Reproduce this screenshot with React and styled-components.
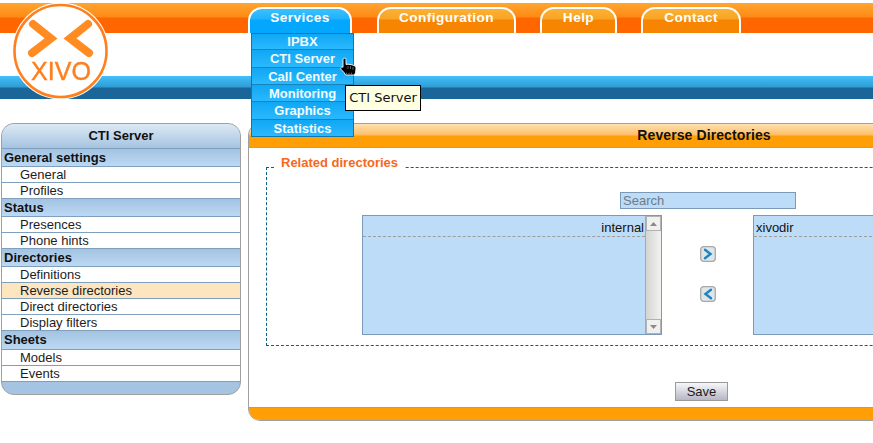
import React from 'react';
import styled, { createGlobalStyle } from 'styled-components';

const Global = createGlobalStyle`
  html, body { margin: 0; padding: 0; background: #fff; overflow: hidden; }
  body { font-family: "Liberation Sans", Arial, sans-serif; color: #000; }
`;
const Page = styled.div`
  position: relative; width: 873px; height: 443px; overflow: hidden; padding-top: 3px; box-sizing: border-box;
`;
const TopBar = styled.header`
  height: 30px; box-sizing: border-box; padding: 4px 0 0 248px; display: flex; gap: 24px; align-items: stretch;
  background: linear-gradient(#ffa531 0, #fd8a14 14px, #ff6600 15px, #ff6600 100%);
`;
const Tab = styled.div`
  box-sizing: border-box; height: 26px; width: ${p => p.$w}px; text-align: center;
  margin-right: ${p => p.$mr || 0}px;
  border: 2px solid #fff; border-bottom: 0; border-radius: 14px 14px 0 0;
  background: ${p => p.$active
    ? 'linear-gradient(#3cc0fd 0, #1fb2fb 10px, #03a7fd 11px, #03a7fd 100%)'
    : 'linear-gradient(#fbb135 0, #f9a424 10px, #f78502 11px, #f78502 100%)'};
  color: #fff; font-weight: bold; font-size: 13.6px; letter-spacing: .45px; line-height: 17px;
`;
const WhiteBand = styled.div`height: 43px;`;
const BlueBar = styled.div`
  height: 23px;
  background: linear-gradient(#44c0fc 0, #2f9cd3 11px, #1a6699 12px, #1a6699 100%);
`;
const Body = styled.div`
  display: flex; align-items: flex-start; gap: 7px; padding: 24px 0 0 1px;
`;
const Logo = styled.svg`
  position: absolute; left: 11px; top: 2px; width: 100px; height: 100px; filter: blur(.35px);
`;
const DropDown = styled.nav`
  position: absolute; left: 251px; top: 33px; width: 103px; height: 104px; box-sizing: border-box;
  display: flex; flex-direction: column; border: 1px solid #0d78b0; z-index: 3;
`;
const DropItem = styled.div`
  flex: 1 1 0; min-height: 0; box-sizing: border-box; display: flex; align-items: center; justify-content: center; padding-top: 1px;
  background: linear-gradient(#10a7f3, #2ab9ff); color: #f4fbff; font-weight: bold; font-size: 13px;
  border-top: 1px solid #1683bb; &:first-child { border-top: 0; padding-top: 0; }
`;
const Tooltip = styled.div`
  position: absolute; left: 345px; top: 85px; width: 76px; height: 26px; box-sizing: border-box; z-index: 4;
  border: 1px solid #000; background: #ffffe1; font: 13px/24px "DejaVu Sans", sans-serif; color: #111; text-align: center;
`;
const Cursor = styled.svg`
  position: absolute; left: 339px; top: 57px; width: 19px; height: 19px; z-index: 5;
`;
const Side = styled.aside`
  width: 240px; flex: none; height: 272px; box-sizing: border-box; border-radius: 13px; overflow: hidden;
  border: 1px solid #a0a0a0; background: #a5c4e1; display: flex; flex-direction: column;
`;
const SideTitle = styled.div`
  height: 25px; flex: none; text-align: center; font-weight: bold; font-size: 13px; line-height: 24px; color: #111;
  background: linear-gradient(#dde9f4, #a5c4e1);
  border-bottom: 1px solid #7f9fbd; box-sizing: border-box;
`;
const SideHead = styled.div`
  height: ${p => p.$h}px; flex: none; box-sizing: border-box; padding-left: 2px; font-weight: bold; font-size: 13px; line-height: 17px; color: #111;
  background: linear-gradient(#a3c3e1, #bcd9f4);
  border-bottom: 1px solid #7f9fbd;
`;
const SideItem = styled.div`
  height: 16px; flex: none; box-sizing: border-box; padding-left: 18px; font-size: 13px; line-height: 15px; color: #1c1c1c;
  background: ${p => p.$active ? '#fde5c0' : '#fff'};
  border-bottom: 1px solid #7f9fbd;
`;
const Panel = styled.main`
  width: 912px; flex: none; height: 298px; box-sizing: border-box; display: flex; flex-direction: column;
  border: 1px solid #a0a0a0; border-radius: 12px; overflow: hidden; background: #fff;
`;
const PanelHead = styled.div`
  height: 23px; flex: none; text-align: center; font-weight: bold; font-size: 14px; letter-spacing: .1px; line-height: 23px; color: #111;
  background: linear-gradient(#fee1b4 0, #fdbe65 11px, #ff9e05 12px, #ff9e05 100%);
`;
const PanelBody = styled.div`
  flex: 1; padding: 8px 0 0 17px; border-top: 1px solid #a0a0a0; border-bottom: 1px solid #a0a0a0;
  display: flex; flex-direction: column;
`;
const Field = styled.fieldset`
  width: 876px; height: 190px; box-sizing: border-box; margin: 0; padding: 0;
  border: 1px dashed #0d5f86;
`;
const Legend = styled.legend`
  margin-left: 8px; padding: 0 6px 8px; font-weight: bold; font-size: 13px; color: #f7671c; line-height: 14px;
`;
const FieldInner = styled.div`padding-left: 95px;`;
const Search = styled.input`
  display: block; margin: 14px 0 6px 258px; width: 176px; height: 17px; box-sizing: border-box;
  border: 1px solid #7a9ab8; background: #bddcf8; padding: 0 2px; font: 13px "Liberation Sans", sans-serif;
  &::placeholder { color: #6d7a87; opacity: 1; }
`;
const Lists = styled.div`display: flex; align-items: stretch;`;
const ListBox = styled.div`
  width: 300px; height: 120px; box-sizing: border-box; border: 1px solid #7a9ab8; background: #bddcf8; display: flex; flex: none;
`;
const ListBody = styled.div`flex: 1; min-width: 0;`;
const ListRow = styled.div`
  height: 21px; box-sizing: border-box; padding: 0 1px 0 2px; font-size: 13px; line-height: 24px; color: #111;
  border-bottom: 1px dashed #a09c98; text-align: ${p => p.$right ? 'right' : 'left'};
`;
const ScrollBar = styled.div`
  width: 15px; flex: none; display: flex; flex-direction: column; justify-content: space-between;
  background: linear-gradient(90deg, #d4d4d2, #f2f2f0);
  border-left: 1px solid #a9a9a9;
`;
const ScrollBtn = styled.div`
  height: 15px; background: #f0f0ee; border: 1px solid #b2b2b2; box-sizing: border-box; display: flex; align-items: center; justify-content: center;
`;
const Arrows = styled.div`
  width: 91px; flex: none; display: flex; flex-direction: column; align-items: center; padding-top: 31px; gap: 24px; box-sizing: border-box;
`;
const ArrowBtn = styled.svg`width: 16px; height: 16px; display: block;`;
const SaveRow = styled.div`display: flex; padding: 36px 0 0 409px;`;
const Save = styled.button`
  width: 53px; height: 19px; box-sizing: border-box; padding: 0; border: 1px solid #9a9a9a; font: 13px "Liberation Sans", sans-serif; color: #1a1a1a;
  background: linear-gradient(#f7f7fa, #b6b6c6); border-radius: 0;
`;
const PanelFoot = styled.div`height: 12px; flex: none; background: #ff9e05;`;

const Arrow = ({ d }) => (
  <ArrowBtn viewBox="0 0 16 16">
    <rect x=".7" y=".7" width="14.6" height="14.6" rx="3" fill="#dfe5e9" stroke="#a8a8a8" strokeWidth="1.3" />
    <path d={d} fill="none" stroke="#1b86c0" strokeWidth="2.4" strokeLinecap="round" strokeLinejoin="miter" />
  </ArrowBtn>
);

const groups = [
  ['General settings', ['General', 'Profiles'], 18],
  ['Status', ['Presences', 'Phone hints'], 18],
  ['Directories', ['Definitions', 'Reverse directories', 'Direct directories', 'Display filters'], 18],
  ['Sheets', ['Models', 'Events'], 19],
];
const tabs = [['Services', 104, true], ['Configuration', 139], ['Help', 77], ['Contact', 100]];
const menu = ['IPBX', 'CTI Server', 'Call Center', 'Monitoring', 'Graphics', 'Statistics'];

export default function App() {
  return (
    <Page>
      <Global />
      <TopBar>
        {tabs.map(([t, w, a], i) => <Tab key={t} $w={w} $active={a} $mr={i === 0 ? 1 : 0}>{t}</Tab>)}
      </TopBar>
      <WhiteBand />
      <BlueBar />
      <Body>
        <Side>
          <SideTitle>CTI Server</SideTitle>
          {groups.map(([h, items, ht]) => (
            <React.Fragment key={h}>
              <SideHead $h={ht}>{h}</SideHead>
              {items.map(i => <SideItem key={i} $active={i === 'Reverse directories'}>{i}</SideItem>)}
            </React.Fragment>
          ))}
        </Side>
        <Panel>
          <PanelHead>Reverse Directories</PanelHead>
          <PanelBody>
            <Field>
              <Legend>Related directories</Legend>
              <FieldInner>
                <Search placeholder="Search" />
                <Lists>
                  <ListBox>
                    <ListBody><ListRow $right>internal</ListRow></ListBody>
                    <ScrollBar>
                      <ScrollBtn><svg width="7" height="4"><path d="M3.5 0L7 4H0z" fill="#8a8a8a" /></svg></ScrollBtn>
                      <ScrollBtn><svg width="7" height="4"><path d="M0 0H7L3.5 4z" fill="#8a8a8a" /></svg></ScrollBtn>
                    </ScrollBar>
                  </ListBox>
                  <Arrows>
                    <Arrow d="M5 3.800L10.500 8L5 12.200" />
                    <Arrow d="M11 3.800L5.500 8L11 12.200" />
                  </Arrows>
                  <ListBox>
                    <ListBody><ListRow>xivodir</ListRow></ListBody>
                  </ListBox>
                </Lists>
              </FieldInner>
            </Field>
            <SaveRow><Save>Save</Save></SaveRow>
          </PanelBody>
          <PanelFoot />
        </Panel>
      </Body>
      <Logo viewBox="0 0 100 100">
        <circle cx="49.5" cy="49" r="48.5" fill="#fff" />
        <circle cx="49.5" cy="49" r="46" fill="#fff" stroke="#ff7f1e" strokeWidth="2.6" />
        <path d="M22 22L40 36.500L21 51M77 22L59 36.500L78 51" fill="none" stroke="#ff8c22" strokeWidth="8" strokeLinecap="round" strokeLinejoin="miter" />
        <text x="50" y="78" textAnchor="middle" fontFamily="'Liberation Sans', sans-serif" fontSize="25" fill="#ff7f1e" stroke="#ff7f1e" strokeWidth=".4" textLength="60" lengthAdjust="spacingAndGlyphs">XIVO</text>
      </Logo>
      <DropDown>
        {menu.map(m => <DropItem key={m}>{m}</DropItem>)}
      </DropDown>
      <Tooltip>CTI Server</Tooltip>
      <Cursor viewBox="0 0 19 19">
        <path d="M4 2.500C4 .800 7 .800 7 2.500V7.500L9 7.200 11 7.500 13 7.800 15.500 8.800C16.800 9.500 17 10.500 17 12L16.500 15.500 15.500 18H6.500L5 15.500 2.200 12.500C1 11 2.500 9 4 10.300z" fill="#000" stroke="#fff" strokeWidth=".9" strokeLinejoin="round" />
        <path d="M9 9v3M11.500 9v3M14 10v3" stroke="#fff" strokeWidth=".6" opacity=".6" />
        <path d="M7 16.300h1M9.500 16.300h1M12 16.300h1" stroke="#999" strokeWidth=".9" />
      </Cursor>
    </Page>
  );
}
